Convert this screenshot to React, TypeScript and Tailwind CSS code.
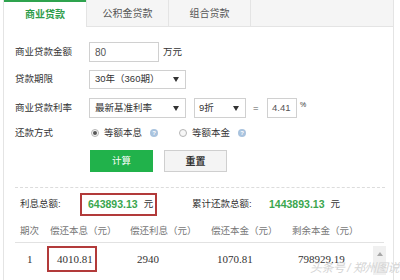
import React from 'react';

const Arrow = () => (
    <svg width="6" height="5" viewBox="0 0 6 5" className="shrink-0">
        <polygon points="0,0 6,0 3,5" fill="#333" />
    </svg>
);

const Help = () => (
    <span className="ml-[8px] flex h-[8px] w-[8px] items-center justify-center rounded-full bg-[#a9c3de] text-[6px] font-bold leading-none text-white">?</span>
);

const Radio = ({ checked }: { checked?: boolean }) => (
    <span className="flex h-[8px] w-[8px] items-center justify-center rounded-full border border-[#b5b5b5] bg-[#f7f7f7]">
        {checked && <span className="h-[4px] w-[4px] rounded-full bg-[#555]" />}
    </span>
);

const tabs = ['商业贷款', '公积金贷款', '组合贷款'];

export default function App() {
    return (
        <div className="relative h-[280px] w-[400px] overflow-hidden bg-white font-['Liberation_Sans','Noto_Sans_CJK_SC',sans-serif] text-[#333]">
            <div className="ml-[3px] h-full w-[391px] border-x border-[#e4e4e4]">
                {/* tabs */}
                <div className="flex h-[27px] bg-[#f5f5f5]">
                    {tabs.map((t, i) =>
                        i === 0 ? (
                            <div key={t} className="flex w-[82px] items-center justify-center border-t-2 border-[#2ea34e] bg-white text-[10px] font-bold text-[#2f9d4c]">
                                {t}
                            </div>
                        ) : (
                            <div key={t} className="flex w-[82px] items-center justify-center border-b border-l border-[#e4e4e4] text-[10px] text-[#555]">
                                {t}
                            </div>
                        )
                    )}
                    <div className="flex-1 border-b border-l border-[#e4e4e4]" />
                </div>

                {/* form */}
                <div className="pl-[11px] text-[9.5px]">
                    <div className="mt-[15px] flex h-[20px] items-center">
                        <span className="w-[74px]">商业贷款金额</span>
                        <div className="flex h-[20px] w-[70px] items-center border border-[#d0d0d0] pl-[5px] text-[10px] text-[#555]">80</div>
                        <span className="ml-[4px]">万元</span>
                    </div>
                    <div className="mt-[8px] flex h-[19px] items-center">
                        <span className="w-[74px]">贷款期限</span>
                        <div className="flex h-[19px] w-[97px] items-center justify-between border border-[#d0d0d0] pl-[5px] pr-[6px] text-[9.5px]">
                            <span>30年（360期）</span>
                            <Arrow />
                        </div>
                    </div>
                    <div className="mt-[9px] flex h-[20px] items-center">
                        <span className="w-[74px]">商业贷款利率</span>
                        <div className="flex h-[20px] w-[97px] items-center justify-between border border-[#d0d0d0] pl-[5px] pr-[6px]">
                            <span>最新基准利率</span>
                            <Arrow />
                        </div>
                        <div className="ml-[8px] flex h-[20px] w-[52px] items-center justify-between border border-[#d0d0d0] pl-[4px] pr-[6px]">
                            <span>9折</span>
                            <Arrow />
                        </div>
                        <span className="ml-[7px] w-[14px] text-[#555]">=</span>
                        <div className="flex h-[20px] w-[30px] items-center border border-[#d0d0d0] pl-[4px] text-[9.5px] text-[#555]">4.41</div>
                        <span className="ml-[3px] -mt-[6px] text-[7px]">%</span>
                    </div>
                    <div className="mt-[6px] flex h-[18px] items-center">
                        <span className="w-[76px]">还款方式</span>
                        <Radio checked />
                        <span className="ml-[5px]">等额本息</span>
                        <Help />
                        <span className="ml-[21px]"><Radio /></span>
                        <span className="ml-[5px]">等额本金</span>
                        <Help />
                    </div>
                    <div className="mt-[8px] flex h-[22px] items-center pl-[75px]">
                        <button className="flex h-[22px] w-[63px] items-center justify-center bg-[#21b24b] text-[9.5px] text-white">计算</button>
                        <button className="ml-[11px] flex h-[22px] w-[63px] items-center justify-center border border-[#cfcfcf] bg-[#f4f4f4] text-[10px] font-bold text-[#333]">重置</button>
                    </div>
                    <div className="mr-[8px] mt-[15px] border-t border-dashed border-[#dcdcdc]" />

                    {/* totals */}
                    <div className="mt-[5px] flex h-[23px] items-center pl-[5px]">
                        <span className="w-[60px]">利息总额:</span>
                        <div className="flex h-[23px] w-[77px] items-center border-2 border-[#b23a3a] pl-[6px]">
                            <span className="text-[10.5px] font-bold text-[#3aa64e]">643893.13</span>
                            <span className="ml-[6px]">元</span>
                        </div>
                        <span className="ml-[35px] w-[77px]">累计还款总额:</span>
                        <span className="text-[10.5px] font-bold text-[#3aa64e]">1443893.13</span>
                        <span className="ml-[6px]">元</span>
                    </div>

                    {/* table */}
                    <div className="mr-[9px] flex h-[27px] items-end border-b border-[#e2e2e2] pb-[4px] text-[#777]">
                        <span className="w-[32px] pl-[5px]">期次</span>
                        <span className="w-[80px] pl-[3px]">偿还本息（元）</span>
                        <span className="w-[81px] pl-[3px]">偿还利息（元）</span>
                        <span className="w-[81px] pl-[3px]">偿还本金（元）</span>
                        <span className="pl-[3px]">剩余本金（元）</span>
                    </div>
                    <div className="mr-[7px] flex h-[34px] items-start pt-[3px] font-['Liberation_Serif',serif] text-[11px] text-[#333]">
                        <span className="flex h-[26px] w-[32px] items-center pl-[12px]">1</span>
                        <span className="w-[80px]">
                            <span className="flex h-[26px] w-[50px] items-center border-2 border-[#b23a3a] pl-[8px]">4010.81</span>
                        </span>
                        <span className="flex h-[26px] w-[81px] items-center pl-[10px]">2940</span>
                        <span className="flex h-[26px] w-[81px] items-center pl-[9px]">1070.81</span>
                        <span className="flex h-[26px] items-center pl-[9px]">798929.19</span>
                        <span className="ml-auto flex h-[29px] w-[13px] justify-center bg-[#f0f0f0] pt-[6px]">
                            <svg width="6" height="4" viewBox="0 0 6 4">
                                <polygon points="3,0 6,4 0,4" fill="#a8a8a8" />
                            </svg>
                        </span>
                    </div>
                </div>
            </div>

            {/* watermark */}
            <div className="absolute left-[310px] top-[259px] text-[12px] tracking-[-0.5px] text-[#d4d4d4] italic">头条号 / 郑州图说</div>
        </div>
    );
}
